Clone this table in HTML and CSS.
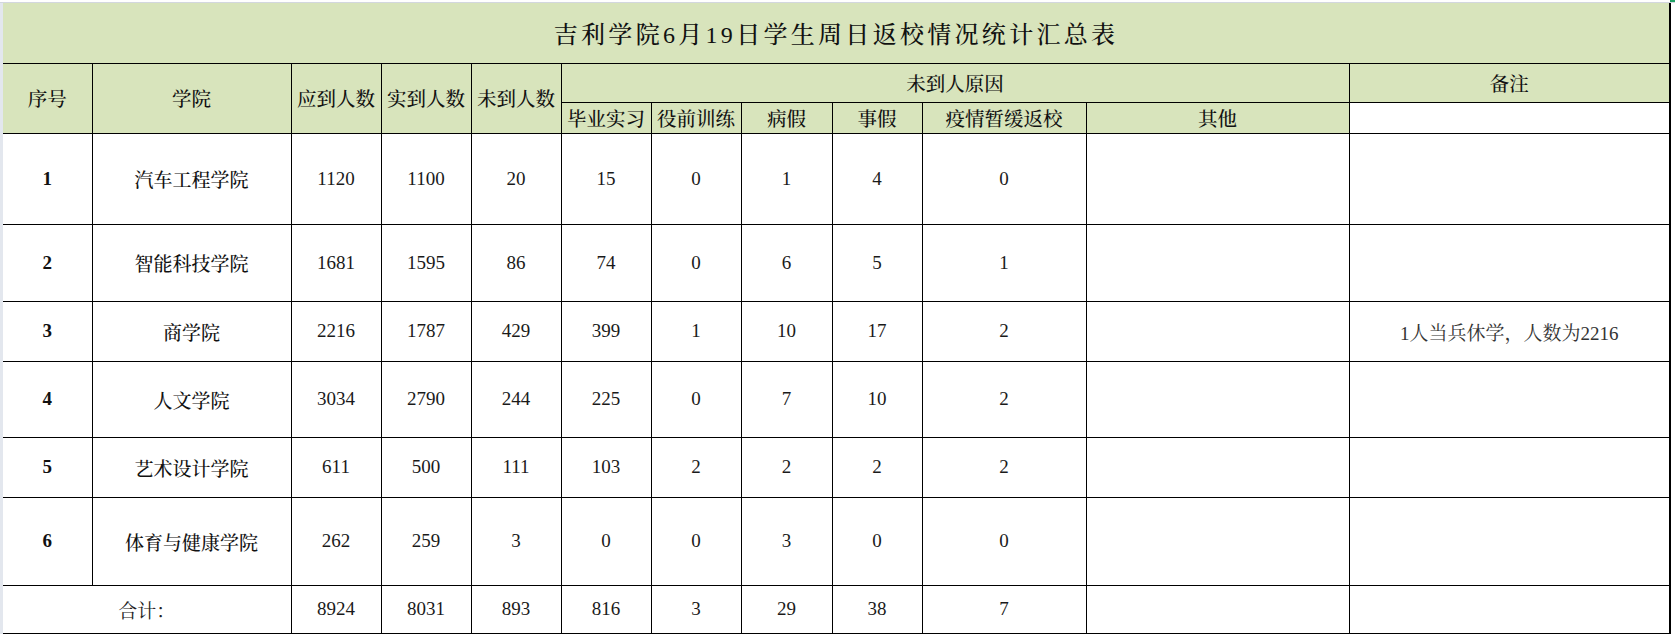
FILE: index.html
```html
<!DOCTYPE html>
<html lang="zh-CN">
<head>
<meta charset="utf-8">
<title>吉利学院6月19日学生周日返校情况统计汇总表</title>
<link rel="stylesheet" href="styles.css">
</head>
<body>
<div class="sheet">
  <div class="topbar"><span class="sel-mark"></span></div>
  <div class="body-row">
    <div class="gutter"></div>
    <table class="grid">
      <colgroup>
        <col class="c-no"><col class="c-col"><col class="c-n"><col class="c-n"><col class="c-n">
        <col class="c-n"><col class="c-n"><col class="c-n91"><col class="c-n">
        <col class="c-yq"><col class="c-other"><col class="c-note">
      </colgroup>
      <tr class="r-title">
        <td colspan="12" class="title">吉利学院6月19日学生周日返校情况统计汇总表</td>
      </tr>
      <tr class="r-h1">
        <th rowspan="2">序号</th>
        <th rowspan="2">学院</th>
        <th rowspan="2">应到人数</th>
        <th rowspan="2">实到人数</th>
        <th rowspan="2">未到人数</th>
        <th colspan="6">未到人原因</th>
        <th>备注</th>
      </tr>
      <tr class="r-h2">
        <th>毕业实习</th>
        <th>役前训练</th>
        <th>病假</th>
        <th>事假</th>
        <th>疫情暂缓返校</th>
        <th>其他</th>
        <td class="blank"></td>
      </tr>
      <tr class="r1">
        <td class="no">1</td><td class="name">汽车工程学院</td>
        <td>1120</td><td>1100</td><td>20</td><td>15</td><td>0</td><td>1</td><td>4</td><td>0</td><td></td><td></td>
      </tr>
      <tr class="r2">
        <td class="no">2</td><td class="name">智能科技学院</td>
        <td>1681</td><td>1595</td><td>86</td><td>74</td><td>0</td><td>6</td><td>5</td><td>1</td><td></td><td></td>
      </tr>
      <tr class="r3">
        <td class="no">3</td><td class="name">商学院</td>
        <td>2216</td><td>1787</td><td>429</td><td>399</td><td>1</td><td>10</td><td>17</td><td>2</td><td></td><td class="note">1人当兵休学，人数为2216</td>
      </tr>
      <tr class="r4">
        <td class="no">4</td><td class="name">人文学院</td>
        <td>3034</td><td>2790</td><td>244</td><td>225</td><td>0</td><td>7</td><td>10</td><td>2</td><td></td><td></td>
      </tr>
      <tr class="r5">
        <td class="no">5</td><td class="name">艺术设计学院</td>
        <td>611</td><td>500</td><td>111</td><td>103</td><td>2</td><td>2</td><td>2</td><td>2</td><td></td><td></td>
      </tr>
      <tr class="r6">
        <td class="no">6</td><td class="name">体育与健康学院</td>
        <td>262</td><td>259</td><td>3</td><td>0</td><td>0</td><td>3</td><td>0</td><td>0</td><td></td><td></td>
      </tr>
      <tr class="r-total">
        <td colspan="2" class="total">合计：</td>
        <td>8924</td><td>8031</td><td>893</td><td>816</td><td>3</td><td>29</td><td>38</td><td>7</td><td></td><td></td>
      </tr>
    </table>
  </div>
</div>
</body>
</html>
```

FILE: styles.css
```css
html, body {
  margin: 0;
  padding: 0;
  background: #ffffff;
}

body {
  width: 1675px;
  height: 639px;
  overflow: hidden;
  font-family: "Liberation Serif", "Noto Serif CJK SC", "Noto Sans CJK SC", serif;
  color: #1a1a1a;
}

.sheet {
  display: flex;
  flex-direction: column;
}

.topbar {
  height: 2px;
  border-bottom: 1px solid #d3d7df;
  position: relative;
}

.sel-mark {
  position: absolute;
  right: 0;
  top: 0;
  width: 5px;
  height: 2px;
  background: #21a366;
}

.body-row {
  display: flex;
}

.gutter {
  width: 3px;
  flex: 0 0 3px;
  background: #e3e7ee;
}

.grid {
  border-collapse: collapse;
  table-layout: fixed;
  width: 1667px;
  flex: 0 0 auto;
}

.c-no { width: 89px; }
.c-col { width: 199px; }
.c-n { width: 90px; }
.c-n91 { width: 91px; }
.c-yq { width: 164px; }
.c-other { width: 263px; }
.c-note { width: 321px; }

.grid th,
.grid td {
  border: 1px solid #000;
  padding: 0;
  text-align: center;
  vertical-align: middle;
  font-size: 19px;
  font-weight: 400;
  white-space: nowrap;
  overflow: hidden;
}

.grid tr > :first-child {
  border-left: 0;
}

.grid tr > :last-child {
  border-right: 2px solid #000;
}

.grid th {
  background: #d8e4bc;
  font-weight: 500;
  color: #111;
  font-size: 19.5px;
}

.grid td.blank {
  background: #ffffff;
}

.r-title { height: 60px; }
.r-h1 { height: 39px; }
.r-h2 { height: 31px; }
.r1 { height: 91px; }
.r2 { height: 77px; }
.r3 { height: 60px; }
.r4 { height: 76px; }
.r5 { height: 60px; }
.r6 { height: 88px; }
.r-total { height: 48px; }

.grid td.title {
  background: #d8e4bc;
  border-top: 0;
  font-size: 24px;
  letter-spacing: 3.3px;
  font-weight: 500;
  color: #111;
}

.grid td.no {
  font-weight: 600;
  color: #111;
}

.grid td.name {
  font-weight: 500;
  color: #111;
}

.grid td.total {
  color: #222;
}

.grid td.note {
  color: #333;
  font-size: 19px;
}
```
